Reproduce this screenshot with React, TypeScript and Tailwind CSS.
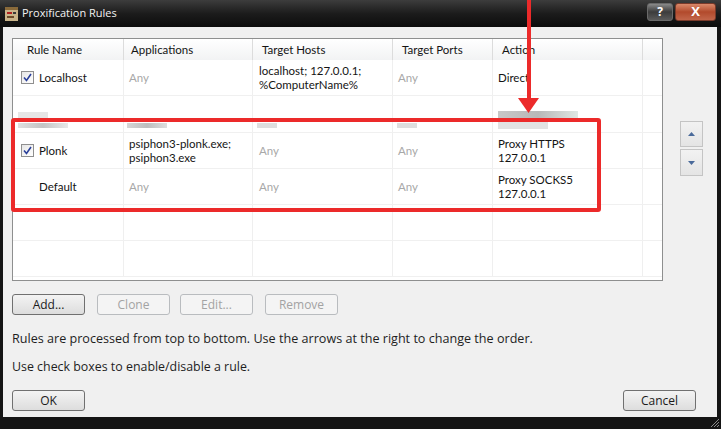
import React from "react";

const FONT = { fontFamily: '"Open Sans", "Noto Sans", sans-serif' };
const LIST_FONT = { fontFamily: 'Lato, "Open Sans", sans-serif' };

const CheckBox = () => (
  <span className="flex h-[13px] w-[13px] items-center justify-center border border-[#8f8f8f] bg-gradient-to-br from-[#e6e6e6] to-[#ffffff]">
    <svg width="9" height="9" viewBox="0 0 9 9">
      <path d="M1 4.5 L3.5 7.5 L8 1" fill="none" stroke="#2a3f9a" strokeWidth="1.6" />
    </svg>
  </span>
);

const Btn = ({ label, disabled }: { label: string; disabled?: boolean }) => (
  <button
    className={
      disabled
        ? "h-[21px] w-[73px] rounded-[3px] border border-[#b9bcbf] bg-[#f4f4f4] text-[12px] text-[#a3a3a3]"
        : "h-[21px] w-[73px] rounded-[3px] border border-[#707070] bg-gradient-to-b from-[#f3f3f3] to-[#dddddd] text-[12px] text-[#1a1a1a]"
    }
  >
    {label}
  </button>
);

const cols = "grid grid-cols-[111px_129px_140px_100px_150px_1fr]";

type Row = {
  check?: boolean;
  name: string;
  apps: string[];
  hosts: string[];
  ports: string;
  action: string[];
};

const rows: Row[] = [
  { check: true, name: "Localhost", apps: ["Any"], hosts: ["localhost; 127.0.0.1;", "%ComputerName%"], ports: "Any", action: ["Direct"] },
  { check: true, name: "Plonk", apps: ["psiphon3-plonk.exe;", "psiphon3.exe"], hosts: ["Any"], ports: "Any", action: ["Proxy HTTPS", "127.0.0.1"] },
  { name: "Default", apps: ["Any"], hosts: ["Any"], ports: "Any", action: ["Proxy SOCKS5", "127.0.0.1"] },
];

const Cell = ({ lines, pad = "pl-[6px]" }: { lines: string[]; pad?: string }) => (
  <div className={`flex flex-col justify-center border-r border-[#efefef] ${pad} leading-[14px]`}>
    {lines.map((l) => (
      <span key={l} className={l === "Any" ? "text-[#a8a8a8]" : "text-[#141414]"}>
        {l}
      </span>
    ))}
  </div>
);

const DataRow = ({ r }: { r: Row }) => (
  <div className={`${cols} h-[36px] border-b border-[#f0f0f0]`}>
    <div className="flex items-center gap-[5px] border-r border-[#efefef] pl-[8px] text-[#141414]">
      {r.check ? <CheckBox /> : <span className="w-[13px]" />}
      {r.name}
    </div>
    <Cell lines={r.apps} pad="pl-[5px]" />
    <Cell lines={r.hosts} />
    <Cell lines={[r.ports]} pad="pl-[5px]" />
    <Cell lines={r.action} pad="pl-[5px]" />
    <div />
  </div>
);

// row that was blurred out in the screenshot
const BlurRow = () => (
  <div className={`${cols} h-[37px] border-b border-[#f0f0f0]`}>
    <div className="flex flex-col justify-end gap-[3px] border-r border-[#efefef] pb-[4px] pl-[5px]">
      <span className="h-[8px] w-[30px] bg-[#e6e6e6]" />
      <span className="h-[5px] w-[50px] bg-gradient-to-r from-[#e0e0e0] via-[#c4c4c4] to-[#e8e8e8]" />
    </div>
    <div className="flex flex-col justify-end border-r border-[#efefef] pb-[4px] pl-[3px]">
      <span className="h-[5px] w-[40px] bg-gradient-to-r from-[#d6d6d6] via-[#bdbdbd] to-[#dedede]" />
    </div>
    <div className="flex flex-col justify-end border-r border-[#efefef] pb-[4px] pl-[4px]">
      <span className="h-[5px] w-[20px] bg-[#dedede]" />
    </div>
    <div className="flex flex-col justify-end border-r border-[#efefef] pb-[4px] pl-[4px]">
      <span className="h-[5px] w-[20px] bg-[#dedede]" />
    </div>
    <div className="flex flex-col justify-end gap-[2px] border-r border-[#efefef] pb-[3px] pl-[5px]">
      <span className="h-[9px] w-[80px] bg-gradient-to-r from-[#c8c8c8] via-[#b8b8b8] to-[#dfe8e4]" />
      <span className="h-[7px] w-[50px] bg-[#e2e2e2]" />
    </div>
    <div />
  </div>
);

const EmptyRow = () => (
  <div className={`${cols} h-[36px] border-b border-[#f0f0f0]`}>
    <div className="border-r border-[#efefef]" />
    <div className="border-r border-[#efefef]" />
    <div className="border-r border-[#efefef]" />
    <div className="border-r border-[#efefef]" />
    <div className="border-r border-[#efefef]" />
    <div />
  </div>
);

const Head = ({ t, pad = "pl-[7px]" }: { t: string; pad?: string }) => (
  <div className={`flex items-center border-r border-[#dcdcdc] ${pad} text-[#141414]`}>{t}</div>
);

export default function App() {
  return (
    <div
      className="relative flex h-[429px] w-[721px] flex-col overflow-hidden bg-[#151515] text-[12px]"
      style={FONT}
    >
      {/* title bar */}
      <div className="flex h-[27px] items-center bg-gradient-to-b from-[#3d3d3d] via-[#1c1c1c] to-[#0c0c0c] pl-[4px]">
        <svg width="15" height="16" viewBox="0 0 15 16">
          <rect x="1" y="1" width="13" height="14" fill="#c9b48a" />
          <rect x="1" y="1" width="13" height="3" fill="#8a6a3a" />
          <rect x="3" y="6" width="5" height="2" fill="#b02020" />
          <rect x="3" y="10" width="7" height="2" fill="#6b4a2a" />
          <rect x="9" y="6" width="3" height="2" fill="#3a3a3a" />
        </svg>
        <span className="ml-[3px] text-[11px] text-[#f2f2f2]">Proxification Rules</span>
        <div className="ml-auto flex h-full items-start gap-[2px] pr-[5px] pt-[3px]">
          <div className="flex h-[18px] w-[26px] items-center justify-center rounded-[3px] border border-[#6a6a6a] bg-gradient-to-b from-[#8a8a8a] via-[#3c3c3c] to-[#5a5a5a] text-[12px] font-bold text-white">
            ?
          </div>
          <div className="flex h-[18px] w-[41px] items-center justify-center rounded-[3px] border border-[#7a3a2a] bg-gradient-to-b from-[#d9896a] via-[#b24a2c] to-[#c2664a] text-[13px] font-bold text-white">
            X
          </div>
        </div>
      </div>

      {/* window body */}
      <div className="ml-[3px] mr-[4px] mb-[12px] flex flex-1 flex-col bg-[#f0f0f0] px-[9px] pt-[11px]">
        <div className="flex">
          <div
            className="flex h-[243px] w-[651px] flex-col border border-[#8e8f8f] bg-white text-[11.5px]"
            style={LIST_FONT}
          >
            <div className={`${cols} h-[21px] bg-gradient-to-b from-[#ffffff] to-[#f2f3f4]`}>
              <Head t="Rule Name" pad="pl-[14px]" />
              <Head t="Applications" />
              <Head t="Target Hosts" pad="pl-[9px]" />
              <Head t="Target Ports" pad="pl-[9px]" />
              <Head t="Action" pad="pl-[9px]" />
              <div />
            </div>
            <DataRow r={rows[0]} />
            <BlurRow />
            <DataRow r={rows[1]} />
            <DataRow r={rows[2]} />
            <EmptyRow />
            <EmptyRow />
          </div>
          <div className="ml-[17px] mt-[83px] flex flex-col gap-[2px]">
            <div className="flex h-[26px] w-[23px] items-center justify-center border border-[#c4c4c4] bg-gradient-to-b from-[#f2f2f2] to-[#e4e4e4]">
              <svg width="7" height="4" viewBox="0 0 7 4">
                <path d="M0 4 L3.5 0 L7 4 Z" fill="#4a6a9a" />
              </svg>
            </div>
            <div className="flex h-[27px] w-[23px] items-center justify-center border border-[#c4c4c4] bg-gradient-to-b from-[#f2f2f2] to-[#e4e4e4]">
              <svg width="7" height="4" viewBox="0 0 7 4">
                <path d="M0 0 L3.5 4 L7 0 Z" fill="#4a6a9a" />
              </svg>
            </div>
          </div>
        </div>

        <div className="mt-[13px] flex">
          <Btn label="Add..." />
          <div className="ml-[12px]">
            <Btn label="Clone" disabled />
          </div>
          <div className="ml-[10px]">
            <Btn label="Edit..." disabled />
          </div>
          <div className="ml-[12px]">
            <Btn label="Remove" disabled />
          </div>
        </div>

        <p className="mt-[15px] text-[12.6px] text-[#1e1e1e]">
          Rules are processed from top to bottom. Use the arrows at the right to change the order.
        </p>
        <p className="mt-[9px] text-[12.4px] text-[#1e1e1e]">Use check boxes to enable/disable a rule.</p>

        <div className="mt-auto mb-[6px] flex justify-between pr-[12px]">
          <Btn label="OK" />
          <Btn label="Cancel" />
        </div>
      </div>

      {/* resize grip */}
      <svg className="pointer-events-none absolute bottom-[1px] right-[1px]" width="12" height="12" viewBox="0 0 12 12">
        <path d="M11 3 L3 11 M11 6 L6 11 M11 9 L9 11" stroke="#8a8a8a" strokeWidth="1" />
      </svg>

      {/* annotation overlay */}
      <div className="pointer-events-none absolute left-[11px] top-[118px] h-[94px] w-[590px] rounded-[3px] border-[4px] border-[#ec2a2a]" />
      <div className="pointer-events-none absolute left-[527px] top-0 h-[100px] w-[4px] bg-[#ec2a2a]" />
      <svg className="pointer-events-none absolute left-[518px] top-[98px]" width="21" height="15" viewBox="0 0 21 15">
        <path d="M0 0 L21 0 L10.5 15 Z" fill="#ec2a2a" />
      </svg>
    </div>
  );
}
